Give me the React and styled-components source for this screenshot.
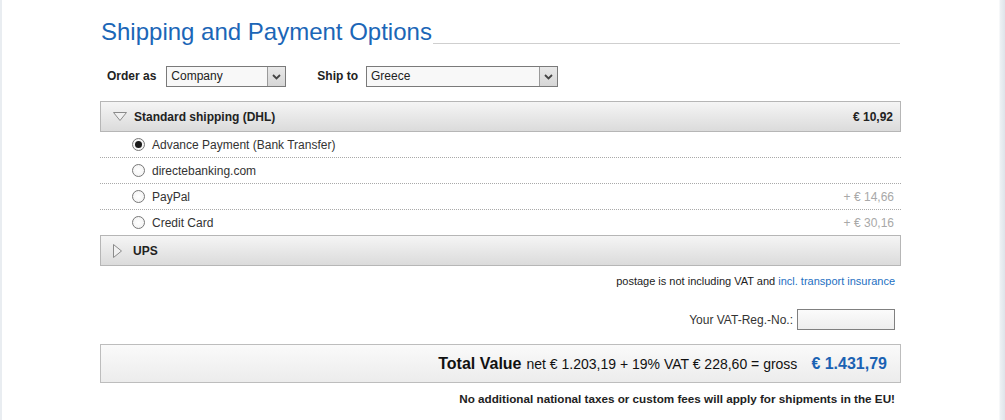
import React from "react";
import styled, { createGlobalStyle } from "styled-components";

const Global = createGlobalStyle`
  html, body { margin: 0; padding: 0; }
  body {
    font-family: "Liberation Sans", Arial, sans-serif;
    background: linear-gradient(to right, #e9edf1 0, #e9edf1 2px, #ffffff 2px, #ffffff 999px, #eef1f4 1000px, #dfe4ea 1005px);
    min-height: 420px;
    color: #222;
  }
`;

const Page = styled.div`
  width: 801px;
  margin-left: 100px;
  padding-top: 16px;
`;

const TitleRow = styled.div`
  display: flex;
  align-items: flex-end;
`;

const Title = styled.h1`
  margin: 0;
  font-size: 24px;
  font-weight: normal;
  color: #1b66b7;
  line-height: 32px;
  padding-left: 1px;
`;

const TitleRule = styled.div`
  flex: 1;
  border-bottom: 1px solid #cfcfcf;
  margin: 0 1px 4px 1px;
`;

const FormRow = styled.div`
  display: flex;
  align-items: center;
  margin-top: 18px;
  padding-left: 7px;
`;

const FieldLabel = styled.span`
  font-size: 12px;
  font-weight: bold;
  color: #222;
  margin-right: ${(p) => p.$gap}px;
  margin-top: -2px;
`;

const Select = styled.div`
  box-sizing: border-box;
  width: ${(p) => p.$w}px;
  height: 21px;
  border: 1px solid #7a7a7a;
  background: #f8f8f8;
  display: flex;
  align-items: stretch;
  margin-right: ${(p) => p.$mr || 0}px;
`;

const SelectText = styled.span`
  flex: 1;
  font-size: 12px;
  color: #222;
  padding-left: 4px;
  line-height: 19px;
`;

const SelectArrow = styled.span`
  width: 17px;
  background: linear-gradient(#e8e8e8, #d6d6d6);
  border-left: 1px solid #9a9a9a;
  display: flex;
  align-items: center;
  justify-content: center;
`;

const Panel = styled.div`
  margin-top: 14px;
`;

const GroupHeader = styled.div`
  box-sizing: border-box;
  height: 31px;
  border: 1px solid #b6b6b6;
  background: linear-gradient(#f5f5f5, #dbdbdb);
  display: flex;
  align-items: center;
  padding: 0 7px 0 12px;
  font-size: 12px;
  font-weight: bold;
  color: #222;
`;

const GroupName = styled.span`
  flex: 1;
  margin-left: ${(p) => p.$indent}px;
`;

const PayRow = styled.label`
  display: flex;
  align-items: center;
  height: 25px;
  padding: 0 7px 0 32px;
  font-size: 12px;
  color: #333;
  border-bottom: ${(p) => (p.$last ? "none" : "1px dotted #a9a9a9")};
`;

const Radio = styled.span`
  box-sizing: border-box;
  width: 13px;
  height: 13px;
  border-radius: 50%;
  border: 1px solid #777;
  background: radial-gradient(circle, #fff 0, #f0f0f0 100%);
  display: flex;
  align-items: center;
  justify-content: center;
  margin-right: 7px;
  &::after {
    content: "";
    width: 7px;
    height: 7px;
    border-radius: 50%;
    background: ${(p) => (p.$on ? "#1a1a1a" : "transparent")};
  }
`;

const PayName = styled.span`
  flex: 1;
`;

const Surcharge = styled.span`
  color: #a8a8a8;
`;

const Note = styled.div`
  text-align: right;
  font-size: 11px;
  color: #222;
  margin-top: 9px;
  padding-right: 6px;
`;

const Link = styled.a`
  color: #1d6fc2;
  text-decoration: none;
`;

const VatRow = styled.div`
  display: flex;
  justify-content: flex-end;
  align-items: center;
  margin-top: 22px;
  padding-right: 6px;
  font-size: 12px;
  color: #333;
`;

const VatInput = styled.div`
  box-sizing: border-box;
  width: 98px;
  height: 21px;
  border: 1px solid #808080;
  background: linear-gradient(#fbfbfb, #eeeeee);
  margin-left: 4px;
`;

const TotalBox = styled.div`
  box-sizing: border-box;
  margin-top: 14px;
  height: 39px;
  border: 1px solid #bdbdbd;
  background: linear-gradient(#fafafa, #ececec);
  display: flex;
  justify-content: flex-end;
  align-items: center;
  padding-right: 13px;
  color: #111;
  font-size: 14px;
`;

const TotalLabel = styled.strong`
  font-size: 16px;
  margin-right: 5px;
`;

const Gross = styled.strong`
  color: #1b62b3;
  font-size: 16px;
  margin-left: 14px;
`;

const Footer = styled.div`
  text-align: right;
  font-size: 11.7px;
  font-weight: bold;
  color: #222;
  margin-top: 9px;
  padding-right: 6px;
`;

const Chevron = () => (
  <svg width="9" height="6" viewBox="0 0 9 6">
    <path d="M1 1 L4.5 4.5 L8 1" fill="none" stroke="#444" strokeWidth="1.8" />
  </svg>
);

const TriDown = () => (
  <svg width="14" height="9" viewBox="0 0 14 9">
    <path d="M0.5 0.5 H13.5 L7 8.5 Z" fill="#f0f0f0" stroke="#8a8a8a" strokeWidth="1" />
  </svg>
);

const TriRight = () => (
  <svg width="9" height="14" viewBox="0 0 9 14">
    <path d="M0.5 0.5 V13.5 L8.5 7 Z" fill="#f0f0f0" stroke="#8a8a8a" strokeWidth="1" />
  </svg>
);

const payments = [
  { name: "Advance Payment (Bank Transfer)", on: true },
  { name: "directebanking.com" },
  { name: "PayPal", extra: "+ € 14,66" },
  { name: "Credit Card", extra: "+ € 30,16" },
];

export default function App() {
  return (
    <>
      <Global />
      <Page>
        <TitleRow>
          <Title>Shipping and Payment Options</Title>
          <TitleRule />
        </TitleRow>
        <FormRow>
          <FieldLabel $gap={10}>Order as</FieldLabel>
          <Select $w={120} $mr={31}>
            <SelectText>Company</SelectText>
            <SelectArrow><Chevron /></SelectArrow>
          </Select>
          <FieldLabel $gap={8}>Ship to</FieldLabel>
          <Select $w={192}>
            <SelectText>Greece</SelectText>
            <SelectArrow><Chevron /></SelectArrow>
          </Select>
        </FormRow>
        <Panel>
          <GroupHeader>
            <TriDown />
            <GroupName $indent={7}>Standard shipping (DHL)</GroupName>
            <span>€ 10,92</span>
          </GroupHeader>
          {payments.map((p, i) => (
            <PayRow key={p.name} $last={i === payments.length - 1}>
              <Radio $on={p.on} />
              <PayName>{p.name}</PayName>
              {p.extra && <Surcharge>{p.extra}</Surcharge>}
            </PayRow>
          ))}
          <GroupHeader>
            <TriRight />
            <GroupName $indent={11}>UPS</GroupName>
          </GroupHeader>
        </Panel>
        <Note>
          postage is not including VAT and <Link href="#">incl. transport insurance</Link>
        </Note>
        <VatRow>
          Your VAT-Reg.-No.:
          <VatInput />
        </VatRow>
        <TotalBox>
          <TotalLabel>Total Value</TotalLabel>
          net € 1.203,19 + 19% VAT € 228,60 = gross
          <Gross>€ 1.431,79</Gross>
        </TotalBox>
        <Footer>No additional national taxes or custom fees will apply for shipments in the EU!</Footer>
      </Page>
    </>
  );
}
